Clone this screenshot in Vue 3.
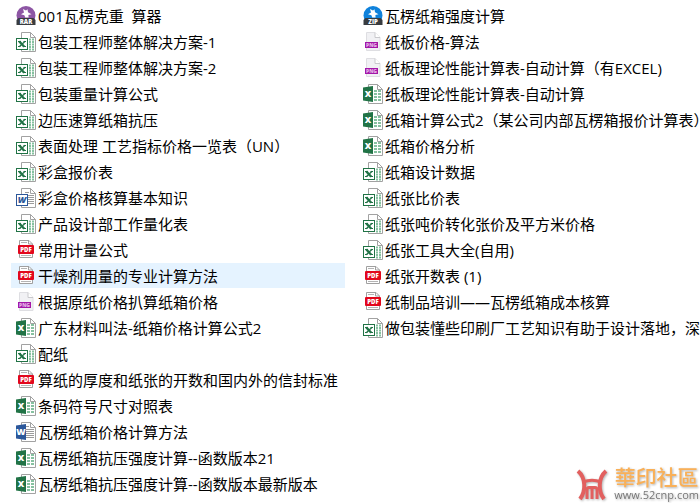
<script setup>
import { ref } from 'vue'

const columns = [
  [
    { type: 'rar', name: '001瓦楞克重  算器' },
    { type: 'xls', name: '包装工程师整体解决方案-1' },
    { type: 'xls', name: '包装工程师整体解决方案-2' },
    { type: 'xls', name: '包装重量计算公式' },
    { type: 'xls', name: '边压速算纸箱抗压' },
    { type: 'xls', name: '表面处理 工艺指标价格一览表（UN）' },
    { type: 'xls', name: '彩盒报价表' },
    { type: 'doc', name: '彩盒价格核算基本知识' },
    { type: 'xls', name: '产品设计部工作量化表' },
    { type: 'pdf', name: '常用计量公式' },
    { type: 'pdf', name: '干燥剂用量的专业计算方法' },
    { type: 'png', name: '根据原纸价格扒算纸箱价格' },
    { type: 'xlsx', name: '广东材料叫法-纸箱价格计算公式2' },
    { type: 'xls', name: '配纸' },
    { type: 'pdf', name: '算纸的厚度和纸张的开数和国内外的信封标准' },
    { type: 'xlsx', name: '条码符号尺寸对照表' },
    { type: 'docx', name: '瓦楞纸箱价格计算方法' },
    { type: 'xlsx', name: '瓦楞纸箱抗压强度计算--函数版本21' },
    { type: 'xlsx', name: '瓦楞纸箱抗压强度计算--函数版本最新版本' },
  ],
  [
    { type: 'zip', name: '瓦楞纸箱强度计算' },
    { type: 'png', name: '纸板价格-算法' },
    { type: 'png', name: '纸板理论性能计算表-自动计算（有EXCEL)' },
    { type: 'xlsx', name: '纸板理论性能计算表-自动计算' },
    { type: 'xlsx', name: '纸箱计算公式2（某公司内部瓦楞箱报价计算表）' },
    { type: 'xlsx', name: '纸箱价格分析' },
    { type: 'xls', name: '纸箱设计数据' },
    { type: 'xls', name: '纸张比价表' },
    { type: 'xls', name: '纸张吨价转化张价及平方米价格' },
    { type: 'xls', name: '纸张工具大全(自用)' },
    { type: 'pdf', name: '纸张开数表 (1)' },
    { type: 'pdf', name: '纸制品培训——瓦楞纸箱成本核算' },
    { type: 'xls', name: '做包装懂些印刷厂工艺知识有助于设计落地，深' },
  ],
]

const active = ref('干燥剂用量的专业计算方法')
</script>

<template>
  <main class="explorer">
    <ul v-for="(files, index) in columns" :key="index" class="files">
      <li
        v-for="file in files"
        :key="file.name"
        class="file"
        :class="{ 'file--active': file.name === active }"
        @mouseenter="active = file.name"
      >
        <svg class="file__icon" viewBox="0 0 20 20" aria-hidden="true">
          <!-- archives -->
          <g v-if="file.type === 'rar' || file.type === 'zip'">
            <circle cx="10" cy="9.5" r="9.5" :fill="file.type === 'rar' ? '#8d56a4' : '#0f82dc'" />
            <path
              d="M7 3L10 4.6L11.5 3.2L12 6.2L15.5 8.2L12.4 9L12.6 11.5H9.2L8.4 9.2L5 8.2L8 6.6Z"
              fill="#fff"
            />
            <path d="M2.5 12H17.5L19.5 14V19H0.5V14Z" fill="#383c40" />
            <text class="tag" x="10" y="18" font-size="6">{{ file.type === 'rar' ? 'RAR' : 'ZIP' }}</text>
          </g>

          <!-- pdf -->
          <g v-else-if="file.type === 'pdf'">
            <path d="M3.5 0.5H13L16.5 4V17.5H3.5Z" fill="#fff" stroke="#a0a0a0" />
            <path d="M5 2.5H11M5 15.5H15" stroke="#b4b4b4" />
            <path d="M12.5 0.5V4H16.5" fill="none" stroke="#a0a0a0" />
            <rect x="2" y="5" width="16" height="9" rx="1" fill="#e2071c" />
            <text class="tag" x="10" y="12" font-size="6">PDF</text>
          </g>

          <!-- png -->
          <g v-else-if="file.type === 'png'">
            <path d="M3.5 0.5H12L17 5.5V18.5H3.5Z" fill="#f1f1f4" stroke="#dedee2" />
            <path d="M12 0.5V5.5H17" fill="#fff" stroke="#c8c8cc" />
            <rect x="2" y="10" width="13" height="6" fill="#a317a8" />
            <text class="tag tag--soft" x="8.5" y="14.8" font-size="5">PNG</text>
          </g>

          <!-- office documents -->
          <g v-else>
            <path
              d="M5.5 0.5H14.5L19.5 5.5V19.5H5.5Z"
              fill="#fff"
              stroke="#a2a2a2"
            />
            <path d="M14.5 0.5V5.5H19.5" fill="none" stroke="#a2a2a2" />
            <path
              v-if="file.type.startsWith('doc')"
              d="M9 4.5H13M9 7.5H18M9 9.5H18M9 11.5H18M9 13.5H18M9 15.5H18"
              stroke="#9b9b9b"
            />
            <path
              v-else-if="file.type === 'xls'"
              d="M13 7.5H15M16 7.5H18M13 10H15M16 10H18M13 12.5H15M16 12.5H18M13 15H15M16 15H18M13 17.5H15M16 17.5H18"
              stroke="#86c1a0"
              stroke-width="2"
            />
            <path
              v-else
              d="M11 7H14M15 7H18M11 10H14M15 10H18M11 13H14M15 13H18M11 16H14M15 16H18"
              stroke="#86c1a0"
              stroke-width="2"
            />
            <template v-if="file.type === 'xls' || file.type === 'doc'">
              <rect
                x="0.5"
                y="6.5"
                width="11"
                height="11"
                fill="#fff"
                :stroke="file.type === 'xls' ? '#217346' : '#2b579a'"
              />
              <g v-if="file.type === 'xls'" stroke="#217346" fill="none">
                <path d="M3.2 9.2L8.2 14.8" stroke-width="2.4" />
                <path d="M9.2 9.2L3.2 14.8" stroke-width="1.2" />
                <path d="M2 9.5H5M7.500 9.5H10M2 14.5H4.500M7 14.5H10" />
              </g>
              <text v-else class="letter letter--slanted" x="6" y="15" font-size="9" fill="#2b579a">W</text>
            </template>
            <template v-else>
              <path d="M0 3.5L10 2V18L0 16.5Z" :fill="file.type === 'xlsx' ? '#217346' : '#2b579a'" />
              <text class="letter" x="5" y="13.2" font-size="9" fill="#fff">{{ file.type === 'xlsx' ? 'X' : 'W' }}</text>
            </template>
          </g>
        </svg>
        <span class="file__name">{{ file.name }}</span>
      </li>
    </ul>

    <div class="brand">
      <svg class="brand__logo" viewBox="0 0 32 32" aria-hidden="true">
        <g fill="none" stroke="#e2605f">
          <path d="M2 2C10 9 10 22 4 30" stroke-width="4" />
          <path d="M30 2C22 9 22 22 28 30" stroke-width="4" />
          <path d="M7 13Q16 9.500 25 13" stroke-width="3" />
          <path d="M11 30V21Q11 18.500 13 18.500H19Q21 18.500 21 21V30M16 19V30" stroke-width="3" />
        </g>
      </svg>
      <div class="brand__text">
        <strong>華印社區</strong>
        <span>www.52cnp.com</span>
      </div>
    </div>
  </main>
</template>

<style>
body {
  margin: 0;
  background: #ffffff;
}
</style>

<style scoped>
.explorer {
  position: relative;
  display: grid;
  grid-template-columns: repeat(2, minmax(0, 1fr));
  gap: 13px;
  min-height: 100vh;
  padding: 3px 8px 0 11px;
  overflow: hidden;
  box-sizing: border-box;
  font-family: 'Open Sans', 'Noto Sans CJK SC', sans-serif;
  font-size: 15px;
  color: #000000;
}

.files {
  display: flex;
  flex-direction: column;
  gap: 1px;
  margin: 0;
  padding: 0;
  list-style: none;
}

.file {
  display: flex;
  gap: 2px;
  align-items: center;
  height: 25px;
  padding-left: 5px;
  line-height: 27px;
  white-space: pre;
}

.file--active {
  background: #e5f3ff;
}

.file__icon {
  flex: none;
  width: 20px;
  height: 20px;
}

.file__name {
  padding-top: 1px;
}

.tag,
.letter {
  font-family: 'Open Sans', sans-serif;
  font-weight: 800;
  text-anchor: middle;
}

.letter--slanted {
  font-style: italic;
}

.tag {
  fill: #ffffff;
}

.tag--soft {
  fill: #e3b2e6;
}

.brand {
  position: absolute;
  right: 1px;
  bottom: 0;
  display: flex;
  gap: 6px;
  align-items: flex-end;
  padding-bottom: 1px;
  filter: drop-shadow(1px 1px 1px rgba(0, 0, 0, 0.3));
}

.brand__logo {
  width: 32px;
  height: 34px;
}

.brand__text {
  display: flex;
  flex-direction: column;
  gap: 1px;
  align-items: center;
}

.brand__text strong {
  font-family: 'Noto Sans CJK TC', sans-serif;
  font-size: 21px;
  font-weight: 500;
  line-height: 22px;
  color: #f9b058;
}

.brand__text span {
  font-size: 11px;
  line-height: 14px;
  color: #777777;
}
</style>
